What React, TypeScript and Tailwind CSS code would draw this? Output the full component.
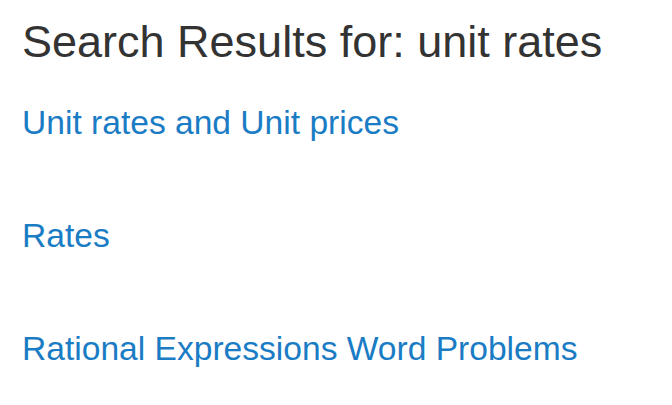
const results = [
  "Unit rates and Unit prices",
  "Rates",
  "Rational Expressions Word Problems",
];

export default function App() {
  return (
    <div className="min-h-screen bg-white px-[22px] pt-[14px] font-['Liberation_Sans',Arial,sans-serif]">
      <h1 className="text-[45px] leading-[56px] text-[#333333]">
        Search Results for: unit rates
      </h1>
      <div className="mt-[33px] flex flex-col gap-[73px]">
        {results.map((r) => (
          <a key={r} href="#" className="text-[33.6px] leading-[40px] text-[#1a7cc4]">
            {r}
          </a>
        ))}
      </div>
    </div>
  );
}
